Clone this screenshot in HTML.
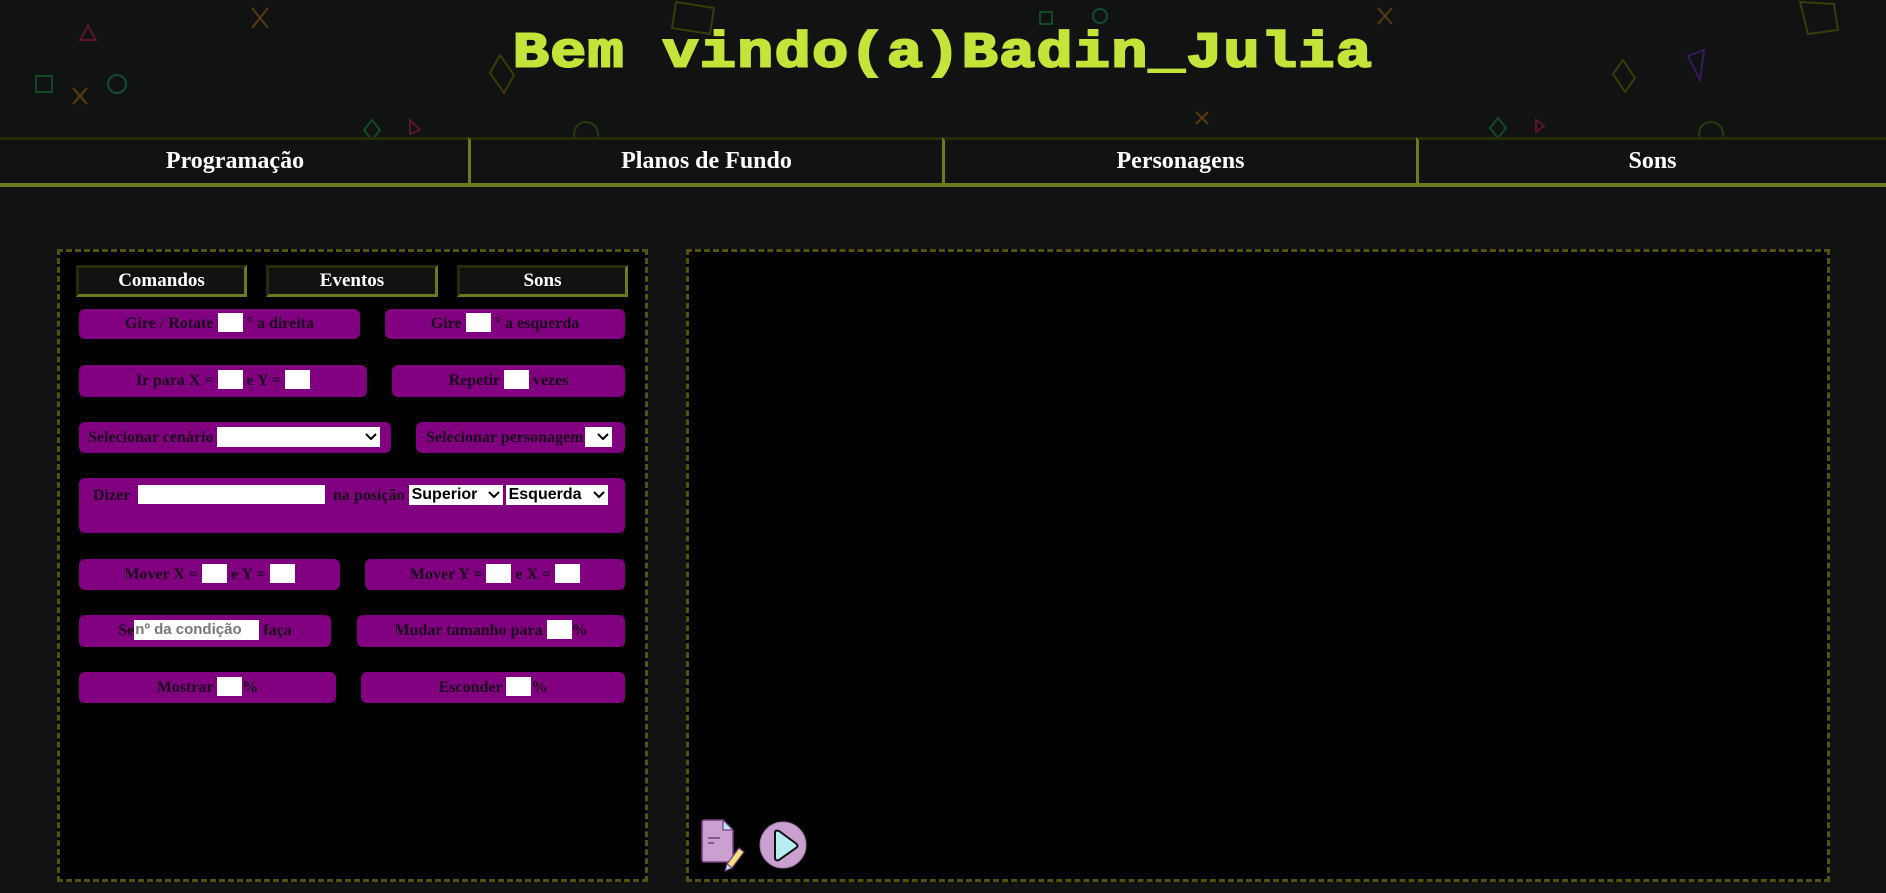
<!DOCTYPE html>
<html><head><meta charset="utf-8"><style>
*{box-sizing:border-box;margin:0;padding:0}
body{width:1886px;height:893px;background:#111212;position:relative;overflow:hidden;font-family:"Liberation Serif",serif}
.abs{position:absolute}
#title{position:absolute;left:0;width:1886px;top:23px;text-align:center;font-family:"Liberation Mono",monospace;font-weight:bold;font-size:60px;letter-spacing:1.4px;color:#c5e43a;line-height:62px;transform:scaleY(0.84);-webkit-text-stroke:2.5px #c5e43a}
.nav{position:absolute;top:137px;height:50px;background:#111212;border-top:3px solid #262b0a;border-bottom:4px solid #6b7a1e;color:#fff;font-weight:bold;font-size:24px;text-align:center;line-height:43px}
.nav.l{border-left:3px solid #6b7a1e}
.panel{position:absolute;background:#000;border:3px dashed #52520a}
.tab{position:absolute;top:265px;height:32px;background:#111212;border:3px solid;border-color:#262b0a #6b7a1e #6b7a1e #262b0a;color:#fff;font-weight:bold;font-size:19px;text-align:center;line-height:25px}
.b{position:absolute;background:#800080;border-radius:6px;color:#1a001a;font-weight:bold;font-size:16px;text-align:center;line-height:30px;white-space:nowrap}
.i{display:inline-block;background:#fff;width:25px;height:19px;vertical-align:middle;margin-top:-3px}
.s{display:inline-block;background:#fff;height:20px;vertical-align:middle;margin-top:-3px;font-family:"Liberation Sans",sans-serif;color:#000;font-size:16px;line-height:20px;text-align:left;padding-left:3px;position:relative}
.s svg{position:absolute;right:3px;top:6px}
</style></head><body>
<svg class="abs" style="left:0;top:0" width="1886" height="137">
<g fill="none" stroke-width="2">
<path d="M252 8l16 20M268 8l-16 20" stroke="#5a3a10"/>
<path d="M73 88l14 16M87 88l-14 16" stroke="#5a3a10"/>
<path d="M80 40l8-14 8 14z" stroke="#5a1530"/>
<rect x="36" y="76" width="16" height="16" stroke="#124a24"/>
<circle cx="117" cy="84" r="9" stroke="#124a3a"/>
<path d="M676 2l38 6-4 26-38-6z" stroke="#3a3a0a"/>
<path d="M500 55l14 20-10 18-14-20z" stroke="#3a3a0a"/>
<path d="M372 120l8 10-8 10-8-10z" stroke="#124a24"/>
<path d="M410 120l10 10-10 4z" stroke="#5a1530"/>
<circle cx="586" cy="134" r="12" stroke="#2a3a10"/>
<rect x="1040" y="12" width="12" height="12" stroke="#124a24"/>
<circle cx="1100" cy="16" r="7" stroke="#124a3a"/>
<path d="M1378 8l14 16M1392 8l-14 16" stroke="#5a3a10"/>
<path d="M1196 112l12 12M1208 112l-12 12" stroke="#5a3a10"/>
<path d="M1800 2l34 2 4 26-30 4z" stroke="#3a3a0a"/>
<path d="M1623 60l12 18-10 14-12-18z" stroke="#3a3a0a"/>
<path d="M1688 56l16-6-4 30z" stroke="#3a1a5a"/>
<path d="M1498 118l8 10-8 10-8-10z" stroke="#124a24"/>
<path d="M1536 120l8 6-8 6z" stroke="#5a1530"/>
<circle cx="1711" cy="134" r="12" stroke="#2a3a10"/>
</g></svg>
<div id="title">Bem vindo(a)Badin_Julia</div>
<div class="nav" style="left:0;width:470px">Programação</div>
<div class="nav l" style="left:468px;width:474px">Planos de Fundo</div>
<div class="nav l" style="left:942px;width:474px">Personagens</div>
<div class="nav l" style="left:1416px;width:470px">Sons</div>

<div class="panel" style="left:57px;top:249px;width:591px;height:633px"></div>
<div class="panel" style="left:686px;top:249px;width:1144px;height:633px"></div>

<div class="tab" style="left:76px;width:171px">Comandos</div>
<div class="tab" style="left:266px;width:172px">Eventos</div>
<div class="tab" style="left:457px;width:171px">Sons</div>

<div class="b" style="left:79px;top:309px;width:281px;height:30px">Gire / Rotate <span class="i"></span> ° a direita</div>
<div class="b" style="left:385px;top:309px;width:240px;height:30px">Gire <span class="i"></span> ° a esquerda</div>

<div class="b" style="left:79px;top:365px;width:288px;height:32px;line-height:32px">Ir para X = <span class="i"></span> e Y = <span class="i"></span></div>
<div class="b" style="left:392px;top:365px;width:233px;height:32px;line-height:32px">Repetir <span class="i"></span> vezes</div>

<div class="b" style="left:79px;top:422px;width:312px;height:31px;line-height:31px;text-align:left;padding-left:9px">Selecionar cenário <span class="s" style="width:163px"><svg width="12" height="8"><path d="M1 1l5 5 5-5" stroke="#000" stroke-width="2" fill="none"/></svg></span></div>
<div class="b" style="left:416px;top:422px;width:209px;height:31px;line-height:31px;text-align:left;padding-left:10px">Selecionar personagem <span class="s" style="width:27px;margin-left:-2px"><svg width="12" height="8"><path d="M1 1l5 5 5-5" stroke="#000" stroke-width="2" fill="none"/></svg></span></div>

<div class="b" style="left:79px;top:478px;width:546px;height:55px;text-align:left;padding-left:14px;line-height:36px">Dizer <span class="i" style="width:187px;margin-left:4px"></span> &nbsp;na posição <span class="s" style="width:94px">Superior<svg width="12" height="8"><path d="M1 1l5 5 5-5" stroke="#000" stroke-width="2" fill="none"/></svg></span> <span class="s" style="width:102px;margin-left:-1px">Esquerda<svg width="12" height="8"><path d="M1 1l5 5 5-5" stroke="#000" stroke-width="2" fill="none"/></svg></span></div>

<div class="b" style="left:79px;top:559px;width:261px;height:31px;line-height:31px">Mover X = <span class="i"></span> e Y = <span class="i"></span></div>
<div class="b" style="left:365px;top:559px;width:260px;height:31px;line-height:31px">Mover Y = <span class="i"></span> e X = <span class="i"></span></div>

<div class="b" style="left:79px;top:615px;width:252px;height:32px;line-height:32px">Se<span class="s" style="width:125px;color:#777;font-weight:bold;font-size:15px;padding-left:1px">nº da condição</span> faça</div>
<div class="b" style="left:357px;top:615px;width:268px;height:32px;line-height:32px">Mudar tamanho para <span class="i"></span>%</div>

<div class="b" style="left:79px;top:672px;width:257px;height:31px;line-height:31px">Mostrar <span class="i"></span>%</div>
<div class="b" style="left:361px;top:672px;width:264px;height:31px;line-height:31px">Esconder <span class="i"></span>%</div>

<svg class="abs" style="left:700px;top:818px" width="50" height="56">
<path d="M4 2h19l10 10v30a2 2 0 0 1-2 2H4a2 2 0 0 1-2-2V4a2 2 0 0 1 2-2z" fill="#c9a0cf" stroke="#7a3a80" stroke-width="1.5"/>
<path d="M23 2v10h10z" fill="#b8ecf2" stroke="#7a3a80" stroke-width="1.2"/>
<path d="M8 20h12M8 25h6" stroke="#7a3a80" stroke-width="1.5"/>
<path d="M39 30l5 4-12 16-5-4z" fill="#f2e27a" stroke="#7a3a80" stroke-width="1.2"/>
<path d="M27 46l5 4-7 3z" fill="#b8ecf2" stroke="#7a3a80" stroke-width="1"/>
</svg>
<svg class="abs" style="left:758px;top:820px" width="52" height="52">
<circle cx="25" cy="25" r="23" fill="#c9a0cf" stroke="#a07aa8" stroke-width="1"/>
<path d="M17 12v26c0 2 2 3 4 2l17-12c2-1.5 2-3 0-4.5L21 11c-2-1-4 0-4 1z" fill="#b8ecf2" stroke="#111" stroke-width="2"/>
</svg>
</body></html>
